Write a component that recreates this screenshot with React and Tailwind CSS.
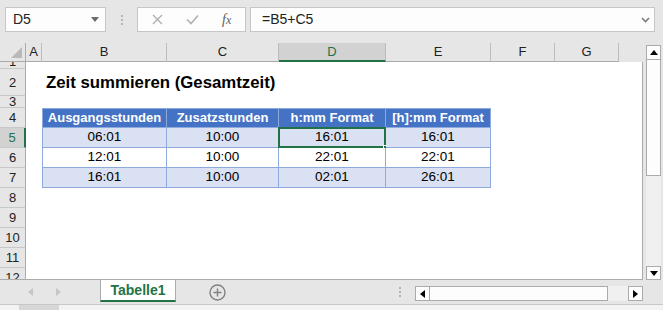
const COLS = [
  { key: 'A', cls: 'w-[16px]' },
  { key: 'B', cls: 'w-[125px]' },
  { key: 'C', cls: 'w-[112px]' },
  { key: 'D', cls: 'w-[107px]' },
  { key: 'E', cls: 'w-[105px]' },
  { key: 'F', cls: 'w-[64px]' },
  { key: 'G', cls: 'w-[64px]' },
]

const HEAD = ['Ausgangsstunden', 'Zusatzstunden', 'h:mm Format', '[h]:mm Format']
const DATA = [
  ['06:01', '10:00', '16:01', '16:01'],
  ['12:01', '10:00', '22:01', '22:01'],
  ['16:01', '10:00', '02:01', '26:01'],
]
const TCOLS = ['w-[125px]', 'w-[112px]', 'w-[107px]', 'w-[105px]']

const font = { fontFamily: '"Liberation Sans", Arial, sans-serif' }

function RowHead({ n, h, align = 'items-center', active }) {
  return (
    <div
      className={`w-[26px] shrink-0 ${h} flex ${align} justify-center overflow-hidden text-[13px] leading-none border-b border-[#c8c8c8] ${
        active
          ? 'bg-[#d2d2d2] text-[#217346] border-r-2 border-r-[#217346]'
          : 'bg-[#e6e6e6] text-[#222] border-r border-r-[#ababab]'
      }`}
    >
      {n}
    </div>
  )
}

function TableRow({ cells, band, selCol }) {
  return (
    <div className="flex h-[20px]">
      {cells.map((c, i) => (
        <div
          key={i}
          className={`${TCOLS[i]} relative shrink-0 flex items-center justify-center text-[13.5px] text-black border-b border-r border-[#8ea9db] ${
            i === 0 ? 'border-l' : ''
          } ${band ? 'bg-[#d9e1f2]' : 'bg-white'}`}
        >
          {c}
          {selCol === i && (
            <>
              <div className="absolute -left-[1px] -top-[1px] -right-[1px] -bottom-[1px] border-2 border-[#217346]" />
              <div className="absolute -right-[4px] -bottom-[4px] w-[6px] h-[6px] bg-[#217346] border border-white" />
            </>
          )}
        </div>
      ))}
    </div>
  )
}

function Arrow({ dir, cls = 'fill-black' }) {
  const pts = {
    up: '0,5 4,0 8,5',
    down: '0,0 8,0 4,5',
    left: '5,0 5,8 0,4',
    right: '0,0 0,8 5,4',
  }[dir]
  const vertical = dir === 'up' || dir === 'down'
  return (
    <svg width={vertical ? 8 : 5} height={vertical ? 5 : 8} className={cls}>
      <polygon points={pts} />
    </svg>
  )
}

export default function App() {
  return (
    <div className="w-[663px] h-[310px] bg-[#e6e6e6] overflow-hidden flex flex-col select-none" style={font}>
      {/* formula bar */}
      <div className="h-[43px] flex items-start pt-[7px] pl-[5px] pr-[8px]">
        <div className="w-[101px] h-[25px] bg-[#fdfdfd] border border-[#c6c6c6] flex items-center justify-between pl-[7px] pr-[6px]">
          <span className="text-[14px] text-[#222]">D5</span>
          <Arrow dir="down" cls="fill-[#6b6b6b]" />
        </div>
        <div className="w-[31px] h-[25px] flex flex-col items-center justify-center gap-[2px]">
          <div className="w-[2px] h-[2px] bg-[#b4b4b4]" />
          <div className="w-[2px] h-[2px] bg-[#b4b4b4]" />
          <div className="w-[2px] h-[2px] bg-[#b4b4b4]" />
        </div>
        <div className="w-[109px] h-[25px] bg-[#fdfdfd] border border-[#c6c6c6] flex items-center pl-[14px]">
          <svg width="11" height="11" viewBox="0 0 11 11" className="stroke-[#b0b0b0]" strokeWidth="1.4">
            <path d="M1 1l9 9M10 1l-9 9" />
          </svg>
          <svg width="13" height="11" viewBox="0 0 13 11" className="ml-[23px] stroke-[#b0b0b0]" fill="none" strokeWidth="1.6">
            <path d="M1 5.5l4 4 7-8" />
          </svg>
          <span className="ml-[23px] text-[14px] italic text-[#606060]" style={{ fontFamily: '"Liberation Serif", serif' }}>
            f<span className="text-[12px]">x</span>
          </span>
        </div>
        <div className="ml-[4px] flex-1 h-[25px] bg-[#fdfdfd] border border-[#c6c6c6] flex items-center justify-between pl-[11px] pr-[4px]">
          <span className="text-[14px] text-[#222]">=B5+C5</span>
          <svg width="9" height="6" viewBox="0 0 9 6" fill="none" className="stroke-[#7a7a7a]" strokeWidth="1.6">
            <path d="M1 1l3.5 3.5L8 1" />
          </svg>
        </div>
      </div>

      {/* sheet */}
      <div className="flex h-[237px]">
        <div className="w-[643px] flex flex-col">
          {/* column headers */}
          <div className="flex h-[19px]">
            <div className="w-[26px] shrink-0 relative border-r border-b border-[#ababab]">
              <svg width="11" height="11" className="absolute right-[3px] bottom-[3px] fill-[#b9b9b9]">
                <polygon points="11,0 11,11 0,11" />
              </svg>
            </div>
            {COLS.map((c) => (
              <div
                key={c.key}
                className={`${c.cls} shrink-0 flex items-center justify-center text-[13px] border-r border-[#bcbcbc] ${
                  c.key === 'D'
                    ? 'bg-[#d2d2d2] text-[#217346] border-b-2 border-b-[#217346]'
                    : 'text-[#222] border-b border-b-[#ababab]'
                }`}
              >
                {c.key}
              </div>
            ))}
            <div className="flex-1 border-b border-[#e6e6e6]" />
          </div>

          {/* rows */}
          <div className="flex-1 bg-white border-r border-b border-[#ababab] overflow-hidden">
            <div className="flex">
              <RowHead n={1} h="h-[7px]" align="items-end" />
            </div>
            <div className="flex h-[27px]">
              <RowHead n={2} h="h-[27px]" />
              <div className="w-[16px]" />
              <div className="pl-[4px] flex items-center whitespace-nowrap text-[16.8px] font-bold text-black">
                Zeit summieren (Gesamtzeit)
              </div>
            </div>
            <div className="flex">
              <RowHead n={3} h="h-[12px]" />
            </div>
            <div className="flex h-[20px]">
              <RowHead n={4} h="h-[20px]" />
              <div className="w-[16px] shrink-0" />
              {HEAD.map((t, i) => (
                <div
                  key={t}
                  className={`${TCOLS[i]} shrink-0 flex items-center justify-center bg-[#4472c4] text-white font-bold text-[13px] border-t border-b border-r border-[#8ea9db] ${
                    i === 0 ? 'border-l' : ''
                  }`}
                >
                  {t}
                </div>
              ))}
            </div>
            {DATA.map((r, i) => (
              <div key={i} className="flex h-[20px]">
                <RowHead n={5 + i} h="h-[20px]" active={i === 0} />
                <div className="w-[16px] shrink-0" />
                <TableRow cells={r} band={i !== 1} selCol={i === 0 ? 2 : -1} />
              </div>
            ))}
            {[8, 9, 10, 11].map((n) => (
              <div key={n} className="flex">
                <RowHead n={n} h="h-[20px]" />
              </div>
            ))}
            <div className="flex">
              <RowHead n={12} h="h-[12px]" align="items-start pt-[3px]" />
            </div>
          </div>
        </div>

        {/* vertical scrollbar */}
        <div className="w-[20px] pl-[3px] pt-[2px] flex flex-col">
          <div className="w-[15px] h-[15px] bg-[#fdfdfd] border border-[#ababab] flex items-center justify-center">
            <Arrow dir="up" />
          </div>
          <div className="w-[15px] h-[116px] bg-[#fdfdfd] border border-t-0 border-[#ababab]" />
          <div className="w-[15px] flex-1 bg-[#f0f0f0]" />
          <div className="w-[15px] h-[14px] bg-[#fdfdfd] border border-[#ababab] flex items-center justify-center">
            <Arrow dir="down" />
          </div>
        </div>
      </div>

      {/* sheet tabs */}
      <div className="h-[24px] flex items-start relative">
        <div className="w-[100px] h-[24px] flex items-center pl-[28px] gap-[23px]">
          <Arrow dir="left" cls="fill-[#c6c6c6]" />
          <Arrow dir="right" cls="fill-[#c6c6c6]" />
        </div>
        <div className="w-[76px] h-[23px] -mt-[1px] bg-white border-x border-t border-[#ababab] border-b-2 border-b-[#217346] flex items-center justify-center text-[14px] font-bold text-[#217346]">
          Tabelle1
        </div>
        <div className="w-[82px] h-[24px] flex items-center justify-center">
          <svg width="17" height="17" viewBox="0 0 17 17" fill="none" className="stroke-[#808080]" strokeWidth="1.4">
            <circle cx="8.5" cy="8.5" r="7.5" />
            <path d="M8.5 4.5v8M4.5 8.5h8" />
          </svg>
        </div>
        <div className="w-[157px] h-[24px] flex items-center justify-end pr-[14px]">
          <div className="flex flex-col gap-[2px]">
            <div className="w-[2px] h-[2px] bg-[#b4b4b4]" />
            <div className="w-[2px] h-[2px] bg-[#b4b4b4]" />
            <div className="w-[2px] h-[2px] bg-[#b4b4b4]" />
          </div>
        </div>
        <div className="flex h-[15px] mt-[6px]">
          <div className="w-[15px] h-[15px] bg-[#fdfdfd] border border-[#ababab] flex items-center justify-center">
            <Arrow dir="left" />
          </div>
          <div className="w-[178px] h-[15px] bg-[#fdfdfd] border-y border-r border-[#ababab]" />
          <div className="w-[20px] h-[15px] bg-[#f0f0f0]" />
          <div className="w-[15px] h-[15px] bg-[#fdfdfd] border border-[#ababab] flex items-center justify-center">
            <Arrow dir="right" />
          </div>
        </div>
      </div>

      {/* status strip */}
      <div className="flex-1 bg-[#f3f3f3] border-t border-[#c8c8c8] flex">
        <div className="ml-[19px] w-[40px] bg-[#d6d6d6]" />
      </div>
    </div>
  )
}
